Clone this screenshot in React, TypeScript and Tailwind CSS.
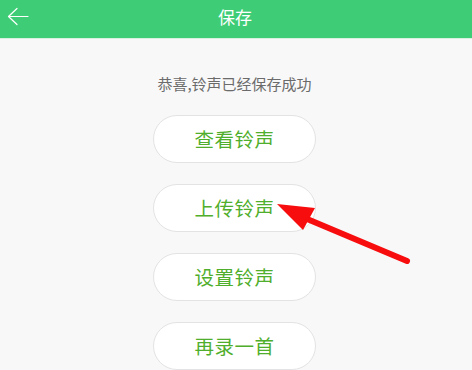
import { ReactNode } from "react";

function ActionButton({ children }: { children: ReactNode }) {
  return (
    <button className="w-[163px] h-[48px] rounded-full bg-white border border-[#e3e3e3] text-[19.5px] text-[#4fae2b] tracking-[0.5px] flex items-center justify-center">
      {children}
    </button>
  );
}

export default function App() {
  return (
    <div
      className="relative w-[472px] h-[370px] overflow-hidden bg-[#f8f8f8]"
      style={{ fontFamily: '"Noto Sans CJK SC", "Noto Sans", sans-serif' }}
    >
      <div className="relative h-[38px] bg-[#3ecd76] flex items-center justify-center">
        <svg className="absolute left-[7px] top-[7px]" width="22" height="20" viewBox="0 0 22 20" fill="none">
          <path d="M10 1.5 L1.5 9.5 L10 17.5 M1.5 9.5 H21" stroke="#fff" strokeWidth="1.2" strokeLinecap="round" strokeLinejoin="round" />
        </svg>
        <span className="text-white text-[17px] leading-none mt-[-6px] mr-[2px]">保存</span>
      </div>
      <div className="h-[1px] bg-[#d9efe0]" />

      <div className="flex flex-col items-center pt-[35px] pr-[3px]">
        <p className="text-[15px] leading-[20px] text-[#6b6b6b]">恭喜,铃声已经保存成功</p>
        <div className="mt-[21px] flex flex-col items-center gap-[21px]">
          <ActionButton>查看铃声</ActionButton>
          <ActionButton>上传铃声</ActionButton>
          <ActionButton>设置铃声</ActionButton>
          <ActionButton>再录一首</ActionButton>
        </div>
      </div>

      {/* annotation arrow */}
      <svg className="absolute left-0 top-0 pointer-events-none" width="472" height="370" viewBox="0 0 472 370">
        <line x1="407" y1="261" x2="300" y2="216" stroke="#f70d0d" strokeWidth="6" strokeLinecap="round" />
        <polygon points="277,204 315,208 303,230" fill="#f70d0d" />
      </svg>
    </div>
  );
}
